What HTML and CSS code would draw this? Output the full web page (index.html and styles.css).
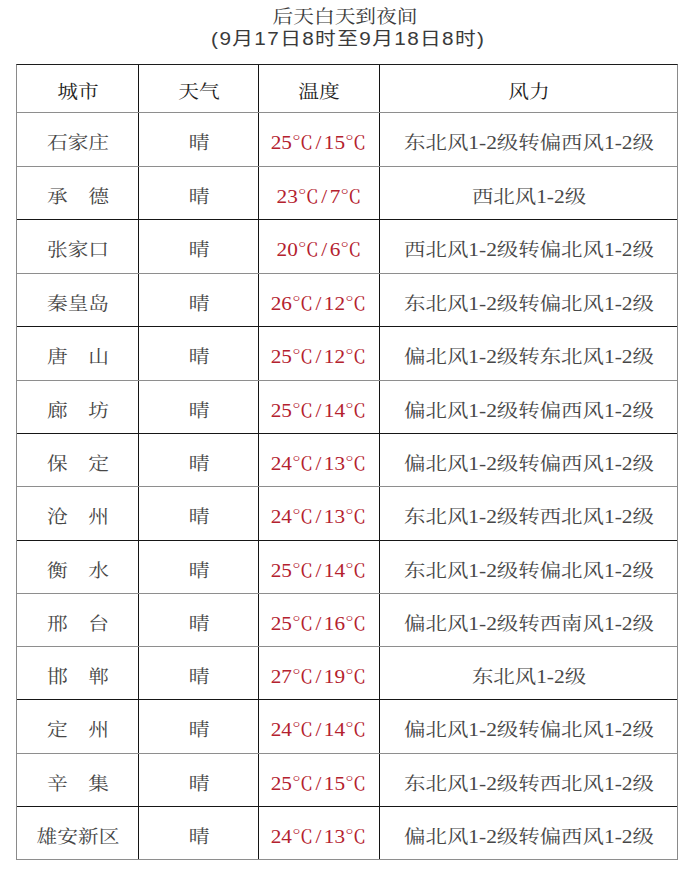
FILE: index.html
```html
<!DOCTYPE html>
<html lang="zh-CN">
<head>
<meta charset="utf-8">
<title>后天白天到夜间</title>
<link rel="stylesheet" href="styles.css">
</head>
<body>
<div class="title">
  <div class="line"><span class="t">后天白天到夜间</span></div>
  <div class="line"><span class="t sub">(9月17日8时至9月18日8时)</span></div>
</div>
<div class="table">
  <div class="row head h48">
    <div class="cell"><span class="t">城市</span></div>
    <div class="cell"><span class="t">天气</span></div>
    <div class="cell"><span class="t">温度</span></div>
    <div class="cell"><span class="t">风力</span></div>
  </div>
  <div class="row h54">
    <div class="cell"><span class="t">石家庄</span></div>
    <div class="cell"><span class="t">晴</span></div>
    <div class="cell temp"><span class="t">25℃<span class="sl">/</span>15℃</span></div>
    <div class="cell wind"><span class="t">东北风1-2级转偏西风1-2级</span></div>
  </div>
  <div class="row h53 dark">
    <div class="cell"><span class="t">承　德</span></div>
    <div class="cell"><span class="t">晴</span></div>
    <div class="cell temp"><span class="t">23℃<span class="sl">/</span>7℃</span></div>
    <div class="cell wind"><span class="t">西北风1-2级</span></div>
  </div>
  <div class="row h54">
    <div class="cell"><span class="t">张家口</span></div>
    <div class="cell"><span class="t">晴</span></div>
    <div class="cell temp"><span class="t">20℃<span class="sl">/</span>6℃</span></div>
    <div class="cell wind"><span class="t">西北风1-2级转偏北风1-2级</span></div>
  </div>
  <div class="row h53 dark">
    <div class="cell"><span class="t">秦皇岛</span></div>
    <div class="cell"><span class="t">晴</span></div>
    <div class="cell temp"><span class="t">26℃<span class="sl">/</span>12℃</span></div>
    <div class="cell wind"><span class="t">东北风1-2级转偏北风1-2级</span></div>
  </div>
  <div class="row h54">
    <div class="cell"><span class="t">唐　山</span></div>
    <div class="cell"><span class="t">晴</span></div>
    <div class="cell temp"><span class="t">25℃<span class="sl">/</span>12℃</span></div>
    <div class="cell wind"><span class="t">偏北风1-2级转东北风1-2级</span></div>
  </div>
  <div class="row h53 dark">
    <div class="cell"><span class="t">廊　坊</span></div>
    <div class="cell"><span class="t">晴</span></div>
    <div class="cell temp"><span class="t">25℃<span class="sl">/</span>14℃</span></div>
    <div class="cell wind"><span class="t">偏北风1-2级转偏西风1-2级</span></div>
  </div>
  <div class="row h53">
    <div class="cell"><span class="t">保　定</span></div>
    <div class="cell"><span class="t">晴</span></div>
    <div class="cell temp"><span class="t">24℃<span class="sl">/</span>13℃</span></div>
    <div class="cell wind"><span class="t">偏北风1-2级转偏西风1-2级</span></div>
  </div>
  <div class="row h54 dark">
    <div class="cell"><span class="t">沧　州</span></div>
    <div class="cell"><span class="t">晴</span></div>
    <div class="cell temp"><span class="t">24℃<span class="sl">/</span>13℃</span></div>
    <div class="cell wind"><span class="t">东北风1-2级转西北风1-2级</span></div>
  </div>
  <div class="row h53">
    <div class="cell"><span class="t">衡　水</span></div>
    <div class="cell"><span class="t">晴</span></div>
    <div class="cell temp"><span class="t">25℃<span class="sl">/</span>14℃</span></div>
    <div class="cell wind"><span class="t">东北风1-2级转偏北风1-2级</span></div>
  </div>
  <div class="row h53">
    <div class="cell"><span class="t">邢　台</span></div>
    <div class="cell"><span class="t">晴</span></div>
    <div class="cell temp"><span class="t">25℃<span class="sl">/</span>16℃</span></div>
    <div class="cell wind"><span class="t">偏北风1-2级转西南风1-2级</span></div>
  </div>
  <div class="row h53 dark">
    <div class="cell"><span class="t">邯　郸</span></div>
    <div class="cell"><span class="t">晴</span></div>
    <div class="cell temp"><span class="t">27℃<span class="sl">/</span>19℃</span></div>
    <div class="cell wind"><span class="t">东北风1-2级</span></div>
  </div>
  <div class="row h54">
    <div class="cell"><span class="t">定　州</span></div>
    <div class="cell"><span class="t">晴</span></div>
    <div class="cell temp"><span class="t">24℃<span class="sl">/</span>14℃</span></div>
    <div class="cell wind"><span class="t">偏北风1-2级转偏北风1-2级</span></div>
  </div>
  <div class="row h53 dark">
    <div class="cell"><span class="t">辛　集</span></div>
    <div class="cell"><span class="t">晴</span></div>
    <div class="cell temp"><span class="t">25℃<span class="sl">/</span>15℃</span></div>
    <div class="cell wind"><span class="t">东北风1-2级转西北风1-2级</span></div>
  </div>
  <div class="row h53">
    <div class="cell"><span class="t">雄安新区</span></div>
    <div class="cell"><span class="t">晴</span></div>
    <div class="cell temp"><span class="t">24℃<span class="sl">/</span>13℃</span></div>
    <div class="cell wind"><span class="t">偏北风1-2级转偏西风1-2级</span></div>
  </div>
</div>
</body>
</html>
```
FILE: styles.css
```css
html, body {
  margin: 0;
  padding: 0;
  background: #ffffff;
}
body {
  width: 690px;
  height: 892px;
  font-family: "Liberation Serif", "Noto Serif CJK SC", "Noto Sans CJK SC", serif;
  font-size: 18px;
  color: #474747;
}
.t {
  display: inline-block;
  transform: scaleX(1.15);
  transform-origin: center center;
  white-space: nowrap;
}
.title {
  padding-top: 7px;
  text-align: center;
  color: #3a3a3a;
}
.title .line {
  line-height: 21.5px;
  height: 21.5px;
}
.title .sub {
  font-family: "Liberation Sans", "Noto Sans CJK SC", sans-serif;
  font-size: 18px;
  letter-spacing: 1.2px;
  margin-left: 6px;
}
.table {
  margin-top: 14px;
  margin-left: 16px;
  width: 662px;
  box-sizing: border-box;
  border-top: 1px solid #1c1c1c;
  border-left: 1px solid #8a8a8a;
  border-right: 1px solid #8a8a8a;
}
.row {
  display: grid;
  grid-template-columns: 121px 120px 121px 1fr;
  box-sizing: border-box;
  border-bottom: 1px solid #8e8e8e;
}
.row.dark {
  border-bottom-color: #161616;
}
.h48 { height: 48px; }
.h53 { height: 53px; }
.h54 { height: 54px; }
.cell {
  display: flex;
  align-items: center;
  justify-content: center;
  padding-top: 3px;
  box-sizing: border-box;
}
.cell + .cell {
  border-left: 1px solid #141414;
}
.head .cell {
  color: #1e1e1e;
}
.wind .t {
  transform: scaleX(1.19);
}
.temp {
  color: #b4212e;
}
.temp .t {
  transform: scaleX(1.18);
}
.sl {
  margin: 0 2px;
}
```
